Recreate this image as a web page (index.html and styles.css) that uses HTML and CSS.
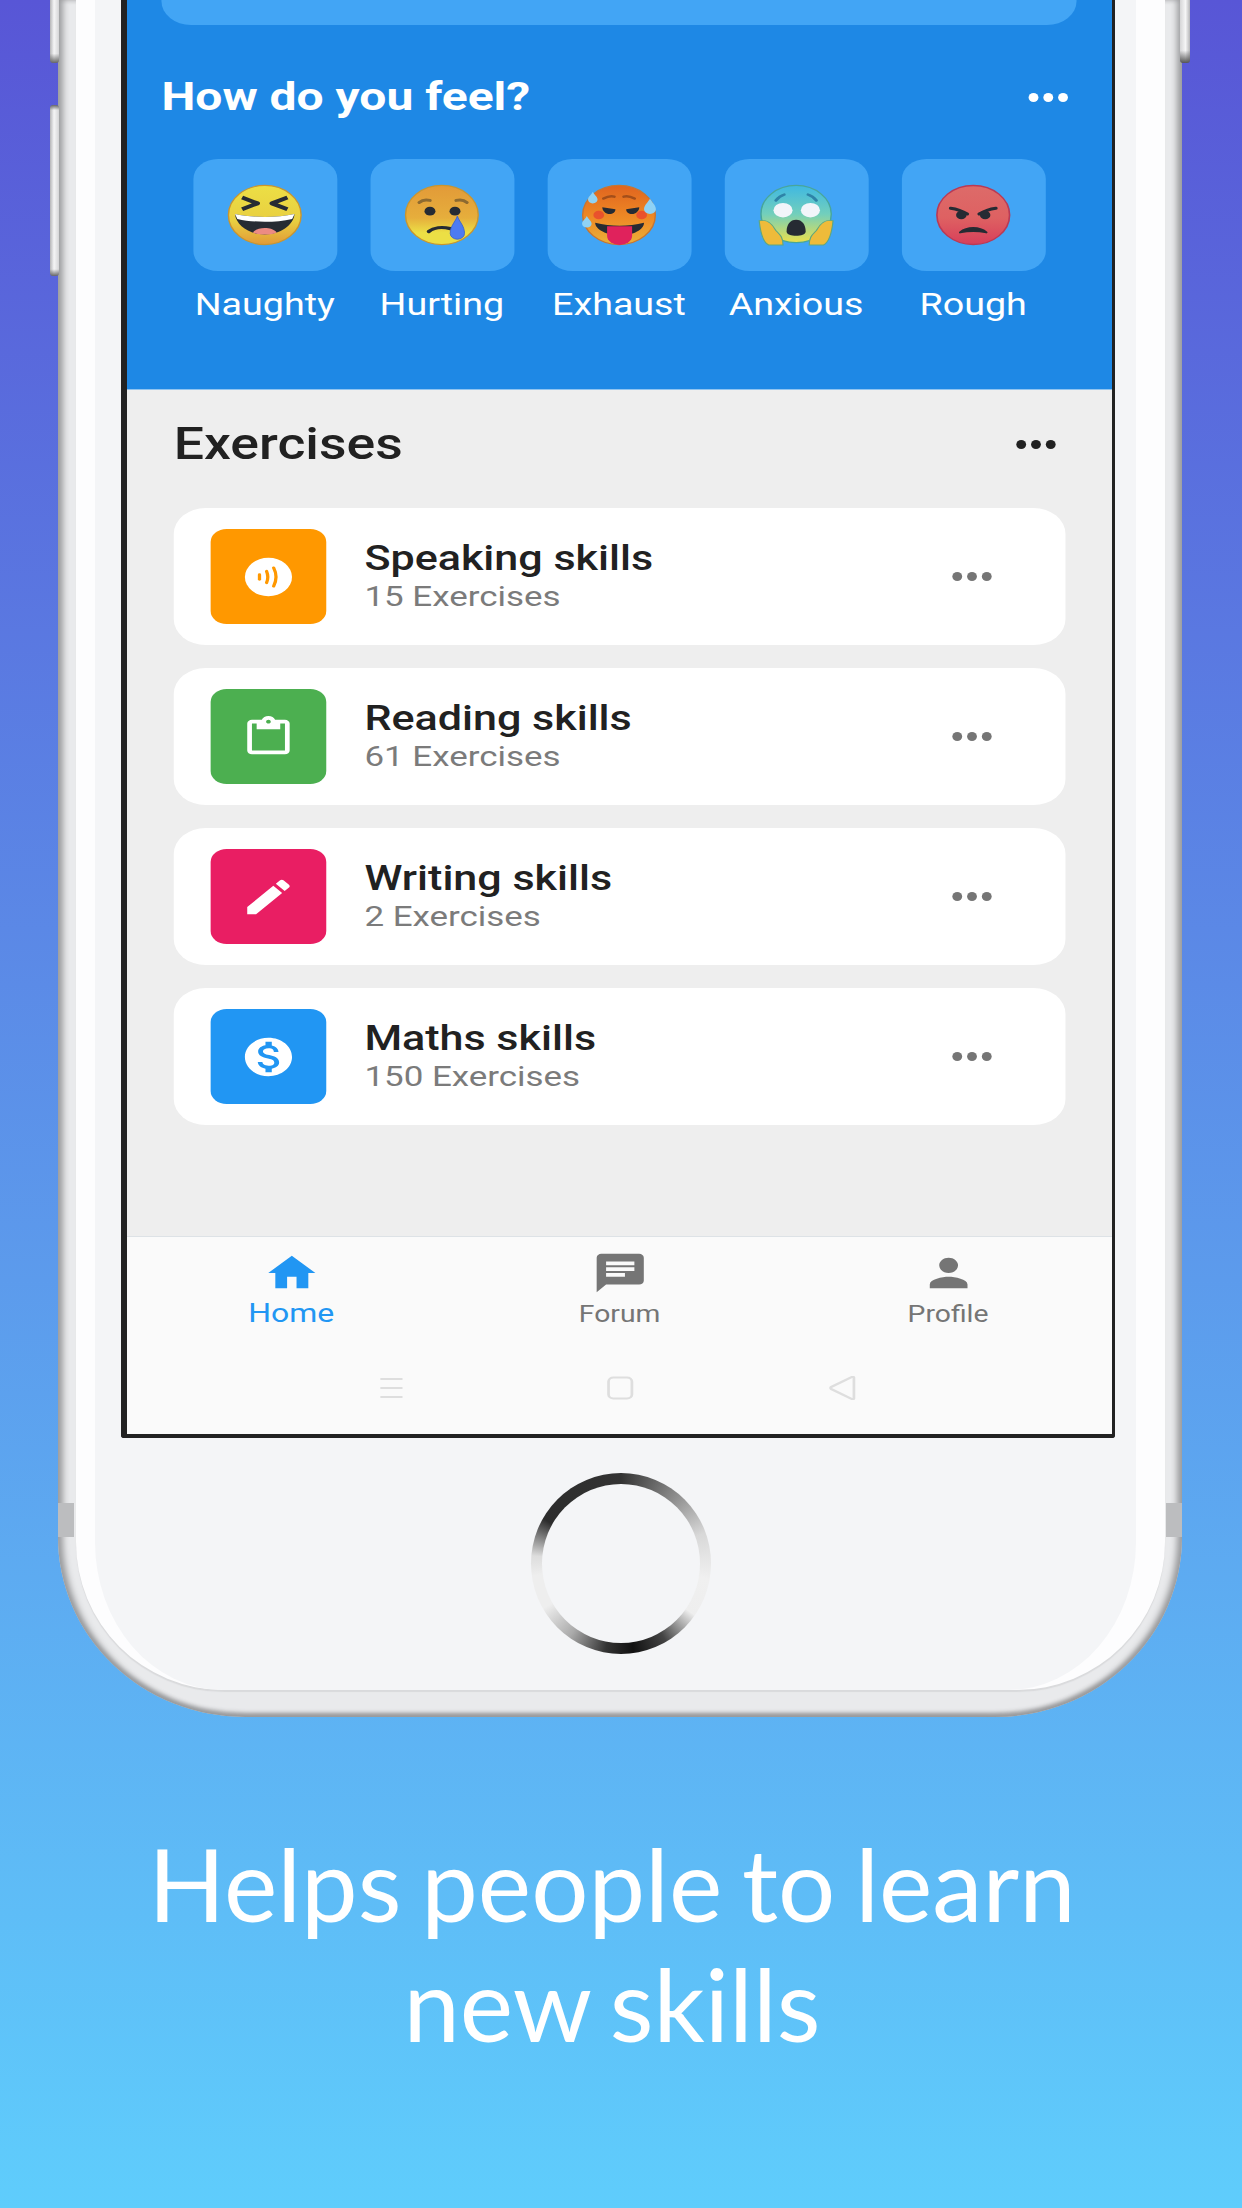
FILE: index.html
```html
<!DOCTYPE html>
<html lang="en">
<head>
<meta charset="utf-8">
<title>Helps people to learn new skills</title>
<link rel="stylesheet" href="styles.css">
</head>
<body>
<div class="stage">
  <div class="phone">
    <span class="btn btn-l1"></span>
    <span class="btn btn-l2"></span>
    <span class="btn btn-r1"></span>
    <span class="band band-l"></span>
    <span class="band band-r"></span>
    <div class="face">
      <div class="face-inner">
        <div class="screen">
          <div class="screen-content">
            <section class="feel">
              <div class="search-card"></div>
              <div class="feel-head">
                <h2 class="feel-title">How do you feel?</h2>
                <span class="dots dots-white"><i></i><i></i><i></i></span>
              </div>
              <div class="moods">
                <div class="mood">
                  <div class="mood-chip">
                    <svg class="emoji" viewBox="0 0 64 64"><defs><linearGradient id="gy" x1="0" y1="0" x2="0" y2="1"><stop offset="0" stop-color="#ecdf45"/><stop offset=".6" stop-color="#e9cf40"/><stop offset="1" stop-color="#e29a38"/></linearGradient></defs><circle cx="32" cy="32" r="30.500" fill="url(#gy)" stroke="#c9952f" stroke-width="1.200"/><path d="M7 31c15 4 35 4 50 0-1 12-12 21-25 21S8 43 7 31z" fill="#262b33"/><path d="M7 31c15 4 35 4 50 0l-2 5c-14 4-32 4-46 0z" fill="#fff"/><path d="M22 50c4-6 16-6 20 0-5 3-15 3-20 0z" fill="#ec8b83"/><path d="M13 14l13 6-13 6M51 14l-13 6 13 6" fill="none" stroke="#262b33" stroke-width="4" stroke-linejoin="round"/></svg>
                  </div>
                  <span class="mood-label">Naughty</span>
                </div>
                <div class="mood">
                  <div class="mood-chip">
                    <svg class="emoji" viewBox="0 0 64 64"><defs><linearGradient id="go" x1="0" y1="0" x2="0" y2="1"><stop offset="0" stop-color="#e29a38"/><stop offset=".55" stop-color="#e6ae3c"/><stop offset=".8" stop-color="#ecdf45"/><stop offset="1" stop-color="#ecdf45"/></linearGradient></defs><circle cx="32" cy="32" r="30.500" fill="url(#go)" stroke="#c9952f" stroke-width="1.200"/><path d="M13 19c3-3 6-3 9-2M53 19c-3-3-6-3-9-2" fill="none" stroke="#8d6a30" stroke-width="3" stroke-linecap="round"/><circle cx="22" cy="28" r="4.600" fill="#262b33"/><circle cx="43" cy="28" r="4.600" fill="#262b33"/><path d="M21 49c4-4 11-5 18-3" fill="none" stroke="#262b33" stroke-width="3.400" stroke-linecap="round"/><path d="M45 33c1.500 6 6 10 6 18a6 6 0 0 1-12 0c0-8 4.500-12 6-18z" fill="#4d7bf3" stroke="#3b62c9" stroke-width=".8"/></svg>
                  </div>
                  <span class="mood-label">Hurting</span>
                </div>
                <div class="mood">
                  <div class="mood-chip">
                    <svg class="emoji" viewBox="0 0 64 64"><defs><linearGradient id="gh" x1="0" y1="0" x2="0" y2="1"><stop offset="0" stop-color="#e0641f"/><stop offset=".55" stop-color="#ee8a25"/><stop offset="1" stop-color="#eab13a"/></linearGradient></defs><circle cx="32" cy="32" r="30.500" fill="url(#gh)" stroke="#c9752f" stroke-width="1.200"/><circle cx="15" cy="32" r="4.500" fill="#e8402f" opacity=".75"/><circle cx="51" cy="32" r="4.500" fill="#e8402f" opacity=".75"/><path d="M19 15c3-2 6-3 9-2M45 15c-3-2-6-3-9-2" fill="none" stroke="#a34e1a" stroke-width="2.600" stroke-linecap="round"/><path d="M18 24l11 2c0 3-2 5-5 5-3 0-6-3-6-7zM49 24l-11 2c0 3 2 5 5 5 3 0 6-3 6-7z" fill="#262b33"/><path d="M12 40c13 4 28 4 41 0 0 7-9 13-20 13S12 47 12 40z" fill="#262b33"/><path d="M22 43.500h21v10a10.500 9.500 0 0 1-21 0z" fill="#e0225c"/><path d="M10 8c1 3 4 5 4 8a4 4 0 0 1-8 0c0-3 3-5 4-8zM5 33c1 3 4 5 4 8a4 4 0 0 1-8 0c0-3 3-5 4-8zM58 15c1 3 5 7 5 11a5 5 0 0 1-10 0c0-4 4-8 5-11z" fill="#8fd2f5"/></svg>
                  </div>
                  <span class="mood-label">Exhaust</span>
                </div>
                <div class="mood">
                  <div class="mood-chip">
                    <svg class="emoji" viewBox="0 0 64 64"><defs><linearGradient id="gb" x1="0" y1="0" x2="0" y2="1"><stop offset="0" stop-color="#3fb8e2"/><stop offset=".5" stop-color="#72cfbc"/><stop offset="1" stop-color="#ece04a"/></linearGradient></defs><circle cx="32" cy="31" r="29.500" fill="url(#gb)" stroke="#48a69a" stroke-width="1.200"/><path d="M15 17c2-3 4-5 7-6M49 17c-2-3-4-5-7-6" fill="none" stroke="#2e83a8" stroke-width="2.600" stroke-linecap="round"/><ellipse cx="21" cy="27" rx="8" ry="7.500" fill="#f2f5fa"/><ellipse cx="44" cy="27" rx="8" ry="7.500" fill="#f2f5fa"/><path d="M24 49c0-7 3-12 8-12s8 5 8 12c0 6-16 6-16 0z" fill="#262b33"/><path d="M1 38c6-2 11 3 14 10 3 4 6 6 6 15H9C4 60 2 50 1 38zM63 38c-6-2-11 3-14 10-3 4-6 6-6 15h12c5-3 7-13 8-25z" fill="#eebb3a" stroke="#5fa77f" stroke-width="1"/></svg>
                  </div>
                  <span class="mood-label">Anxious</span>
                </div>
                <div class="mood">
                  <div class="mood-chip">
                    <svg class="emoji" viewBox="0 0 64 64"><defs><linearGradient id="gr" x1="0" y1="0" x2="0" y2="1"><stop offset="0" stop-color="#dd6b69"/><stop offset=".55" stop-color="#de6162"/><stop offset="1" stop-color="#d83f5a"/></linearGradient></defs><circle cx="32" cy="32" r="30.500" fill="url(#gr)" stroke="#b93a55" stroke-width="1.400"/><path d="M13 25c6 1 10 3 14 6M51 25c-6 1-10 3-14 6" fill="none" stroke="#262b33" stroke-width="3" stroke-linecap="round"/><circle cx="22" cy="32" r="4.400" fill="#262b33"/><circle cx="42" cy="32" r="4.400" fill="#262b33"/><path d="M21 50c6-6 16-6 22 0-7-2-15-2-22 0z" fill="#262b33" stroke="#262b33" stroke-width="2" stroke-linejoin="round"/></svg>
                  </div>
                  <span class="mood-label">Rough</span>
                </div>
              </div>
            </section>
            <section class="exercises">
              <div class="ex-head">
                <h2 class="ex-title">Exercises</h2>
                <span class="dots dots-dark"><i></i><i></i><i></i></span>
              </div>
              <div class="ex-list">
                <article class="ex-card">
                  <div class="ex-icon ic-orange">
                    <svg class="ex-glyph" viewBox="0 0 24 24"><circle cx="12" cy="12" r="10" fill="#fff"/><g fill="none" stroke="#ff9800" stroke-linecap="round" stroke-width="1.400"><path d="M8.200 10.800v2.400"/><path d="M11.200 9c.7 2 .7 4 0 6"/><path d="M14.200 7.200c1.300 3.100 1.300 6.500 0 9.600"/></g></svg>
                  </div>
                  <div class="ex-text"><div class="ex-name">Speaking skills</div><div class="ex-sub">15 Exercises</div></div>
                  <span class="dots dots-grey"><i></i><i></i><i></i></span>
                </article>
                <article class="ex-card">
                  <div class="ex-icon ic-green">
                    <svg class="ex-glyph" viewBox="0 0 24 24"><path d="M19 3h-4.180C14.400 1.840 13.300 1 12 1s-2.400.84-2.820 2H5c-1.100 0-2 .9-2 2v14c0 1.100.9 2 2 2h14c1.100 0 2-.9 2-2V5c0-1.100-.9-2-2-2zm-7 0c.55 0 1 .45 1 1s-.45 1-1 1-1-.45-1-1 .45-1 1-1zm7 16H5V5h2v3h10V5h2v14z" fill="#fff"/></svg>
                  </div>
                  <div class="ex-text"><div class="ex-name">Reading skills</div><div class="ex-sub">61 Exercises</div></div>
                  <span class="dots dots-grey"><i></i><i></i><i></i></span>
                </article>
                <article class="ex-card">
                  <div class="ex-icon ic-pink">
                    <svg class="ex-glyph" viewBox="0 0 24 24"><path d="M3 17.250V21h3.750L17.810 9.940l-3.750-3.750L3 17.250zM20.710 7.040c.39-.39.39-1.020 0-1.410l-2.340-2.340c-.39-.39-1.020-.39-1.410 0l-1.830 1.830 3.750 3.750 1.830-1.830z" fill="#fff"/></svg>
                  </div>
                  <div class="ex-text"><div class="ex-name">Writing skills</div><div class="ex-sub">2 Exercises</div></div>
                  <span class="dots dots-grey"><i></i><i></i><i></i></span>
                </article>
                <article class="ex-card">
                  <div class="ex-icon ic-blue">
                    <svg class="ex-glyph" viewBox="0 0 24 24"><path d="M12 2C6.480 2 2 6.480 2 12s4.480 10 10 10 10-4.480 10-10S17.520 2 12 2zm1.410 16.090V20h-2.670v-1.930c-1.710-.36-3.160-1.460-3.270-3.400h1.960c.1 1.050.82 1.870 2.650 1.870 1.960 0 2.400-.98 2.400-1.590 0-.83-.44-1.610-2.670-2.140-2.480-.6-4.180-1.620-4.180-3.670 0-1.720 1.390-2.840 3.110-3.210V4h2.670v1.950c1.860.45 2.790 1.860 2.850 3.390H14.300c-.05-1.110-.64-1.870-2.220-1.870-1.500 0-2.400.68-2.400 1.640 0 .84.65 1.390 2.670 1.910s4.180 1.390 4.180 3.910c-.01 1.830-1.380 2.830-3.120 3.160z" fill="#fff"/></svg>
                  </div>
                  <div class="ex-text"><div class="ex-name">Maths skills</div><div class="ex-sub">150 Exercises</div></div>
                  <span class="dots dots-grey"><i></i><i></i><i></i></span>
                </article>
              </div>
            </section>
            <nav class="tabbar">
              <div class="tab tab-active">
                <svg class="tab-icon" viewBox="0 0 24 24"><path d="M10 20v-6h4v6h5v-8h3L12 3 2 12h3v8z" fill="#2196f3"/></svg>
                <span class="tab-label">Home</span>
              </div>
              <div class="tab">
                <svg class="tab-icon" viewBox="0 0 24 24"><path d="M20 2H4c-1.100 0-1.990.9-1.990 2L2 22l4-4h14c1.100 0 2-.9 2-2V4c0-1.100-.9-2-2-2zM6 9h12v2H6V9zm8 5H6v-2h8v2zm4-6H6V6h12v2z" fill="#757575"/></svg>
                <span class="tab-label">Forum</span>
              </div>
              <div class="tab">
                <svg class="tab-icon" viewBox="0 0 24 24"><path d="M12 12c2.210 0 4-1.790 4-4s-1.790-4-4-4-4 1.790-4 4 1.790 4 4 4zm0 2c-2.670 0-8 1.340-8 4v2h16v-2c0-2.660-5.330-4-8-4z" fill="#757575"/></svg>
                <span class="tab-label">Profile</span>
              </div>
            </nav>
            <div class="sysnav">
              <svg class="sys-icon sys-menu" viewBox="0 0 24 24"><path d="M3 3h18M3 12h18M3 21h18" fill="none" stroke="#dedede" stroke-width="2.200"/></svg>
              <svg class="sys-icon" viewBox="0 0 24 24"><rect x="2.500" y="1.500" width="19" height="21" rx="4" fill="none" stroke="#dedede" stroke-width="2.200"/></svg>
              <svg class="sys-icon" viewBox="0 0 24 24"><path d="M21 1.500v21a1 1 0 0 1-1.500.6L2.500 13a1.200 1.200 0 0 1 0-2L19.500.9A1 1 0 0 1 21 1.500z" fill="none" stroke="#dedede" stroke-width="2.200"/></svg>
            </div>
          </div>
        </div>
        <div class="home-btn"><div class="home-btn-in"></div></div>
      </div>
    </div>
  </div>
  <p class="caption">Helps people to learn<br>new skills</p>
</div>
</body>
</html>
```
FILE: styles.css
```css
* { box-sizing: border-box; }
html, body { margin: 0; padding: 0; }
body { width: 1242px; height: 2208px; overflow: hidden; }

.stage {
  width: 1242px;
  height: 2208px;
  overflow: hidden;
  background: linear-gradient(180deg, #5856d6 0%, #5fcdfc 100%);
  padding-left: 58px;
}

/* phone body */
.phone {
  position: relative;
  width: 1124px;
  height: 1717px;
  padding: 0 17px 27px 18px;
  background: #e9eaec;
  border-radius: 0 0 187px 187px / 0 0 180px 180px;
  box-shadow: inset 7px 0 6px -2px #9b9c9e, inset -7px 0 6px -2px #9b9c9e, inset 0 -6px 4px -2px #97989a;
}
.btn { position: absolute; }
.btn-l1 { left: -8px; top: 0; width: 9px; height: 63px; border-radius: 0 0 3px 3px; background: linear-gradient(180deg, rgba(102,102,102,0) 85%, #666 100%), linear-gradient(90deg, #b5b5b7, #f5f5f6 45%, #d5d5d7); }
.btn-l2 { left: -8px; top: 105px; width: 9px; height: 171px; border-radius: 3px; background: linear-gradient(180deg, #666 0, rgba(102,102,102,0) 3%, rgba(102,102,102,0) 96%, #666 100%), linear-gradient(90deg, #b5b5b7, #f5f5f6 45%, #d5d5d7); }
.btn-r1 { right: -8px; top: 0; width: 10px; height: 63px; border-radius: 0 0 3px 3px; background: linear-gradient(180deg, rgba(85,85,85,0) 80%, #555 100%), linear-gradient(90deg, #d5d5d7, #f5f5f6 55%, #b5b5b7); }
.band { position: absolute; top: 1503px; width: 16px; height: 34px; background: #bcbdbf; }
.band-l { left: 0; }
.band-r { right: 0; }

.face {
  height: 100%;
  padding: 0 29px 0 19px;
  background: #fdfdfe;
  border-radius: 0 0 148px 148px;
  box-shadow: 0 2px 1px #d9dadc;
}
.face-inner {
  height: 100%;
  background: #f4f5f7;
  border-radius: 0 0 128px 128px / 0 0 148px 148px;
  padding-left: 26px;
}

/* screen */
.screen {
  width: 994px;
  height: 1438px;
  overflow: hidden;
  background: #eee;
  border-left: 6px solid #222;
  border-right: 3px solid #222;
  border-bottom: 4px solid #222;
  border-radius: 0 0 3px 3px;
}
.screen-content {
  width: 801px;
  height: 1434px;
  transform: scaleX(1.23);
  transform-origin: 0 0;
  display: flex;
  flex-direction: column;
  font-family: Roboto, sans-serif;
}

/* how do you feel */
.feel {
  height: 390px;
  background: #1e88e5;
  border-bottom: 1px solid #90c4f0;
  padding: 0 29px 0 28px;
  flex: none;
}
.search-card {
  height: 25px;
  background: #42a5f5;
  border-radius: 0 0 24px 24px;
}
.feel-head {
  display: flex;
  align-items: center;
  justify-content: space-between;
  height: 72px;
  margin-top: 36px;
  padding-right: 7px;
}
.feel-title {
  margin: 0;
  font-size: 39px;
  font-weight: 700;
  color: #fff;
  line-height: 72px;
}
.dots { display: inline-flex; gap: 4px; flex: none; }
.dots i { display: block; width: 8px; height: 9px; border-radius: 50%; }
.dots-white i { background: #fff; }
.dots-dark i { background: #212121; }
.dots-grey i { background: #757575; }

.moods {
  display: flex;
  justify-content: center;
  gap: 27px;
  margin-top: 26px;
}
.mood { display: flex; flex-direction: column; align-items: center; width: 117px; }
.mood-chip {
  width: 117px;
  height: 112px;
  background: #42a5f5;
  border-radius: 20px;
  display: flex;
  align-items: center;
  justify-content: center;
}
.emoji { width: 62px; height: 62px; display: block; }
.mood-label {
  margin-top: 16px;
  font-size: 30.600px;
  line-height: 36px;
  color: #fff;
  white-space: nowrap;
}

/* exercises */
.exercises {
  flex: 1;
  padding: 0 38px 0 38px;
  background: #eee;
}
.ex-head {
  display: flex;
  align-items: center;
  justify-content: space-between;
  height: 118px;
  padding: 0 8px 9px 0;
}
.ex-title {
  margin: 0;
  font-size: 43.500px;
  font-weight: 500;
  color: #212121;
}
.ex-list { display: flex; flex-direction: column; gap: 23px; }
.ex-card {
  display: flex;
  align-items: center;
  height: 137px;
  background: #fff;
  border-radius: 26px;
  padding: 0 60px 0 30px;
}
.ex-icon {
  width: 94px;
  height: 95px;
  border-radius: 13px;
  flex: none;
  display: flex;
  align-items: center;
  justify-content: center;
}
.ic-orange { background: #ff9800; }
.ic-green { background: #4caf50; }
.ic-pink { background: #e91e63; }
.ic-blue { background: #2196f3; }
.ex-glyph { width: 46px; height: 46px; display: block; }
.ex-text { flex: 1; margin-left: 31px; }
.ex-name { font-size: 35px; line-height: 40px; font-weight: 500; color: #212121; }
.ex-sub { font-size: 28.400px; line-height: 36px; color: #7b7b7b; }

/* tab bar */
.tabbar {
  flex: none;
  height: 120px;
  display: grid;
  grid-template-columns: 1fr 1fr 1fr;
  background: #fafafa;
  border-top: 1px solid #dde2e6;
}
.tab { display: flex; flex-direction: column; align-items: center; padding-top: 13px; }
.tab-icon { width: 46px; height: 46px; display: block; }
.tab-label { font-size: 23px; line-height: 30px; color: #757575; margin-top: 4px; }
.tab-active .tab-label { color: #2196f3; font-size: 26px; margin-top: 2px; }

.sysnav {
  flex: none;
  height: 78px;
  background: #fafafa;
  display: flex;
  align-items: flex-start;
  justify-content: center;
  gap: 157px;
  padding-top: 20px;
}
.sys-icon { width: 24px; height: 24px; display: block; }
.sys-menu { margin: 0 5px 0 -5px; }

/* home button */
.home-btn {
  width: 180px;
  height: 181px;
  margin: 35px 0 0 410px;
  border-radius: 50%;
  padding: 11px;
  background: conic-gradient(#333 0deg, #8f8f8f 40deg, #d8d8d8 70deg, #f0f0f0 100deg, #eee 125deg, #444 150deg, #111 172deg, #333 190deg, #aaa 215deg, #eee 240deg, #eee 262deg, #ddd 275deg, #2c2c2c 300deg, #333 360deg);
}
.home-btn-in { width: 100%; height: 100%; border-radius: 50%; background: #f4f5f7; }

/* caption */
.caption {
  margin: 0;
  width: 1108px;
  margin-top: 106px;
  font-family: Lato, sans-serif;
  font-size: 101px;
  word-spacing: -6px;
  line-height: 120px;
  color: #fff;
  text-align: center;
}
```
